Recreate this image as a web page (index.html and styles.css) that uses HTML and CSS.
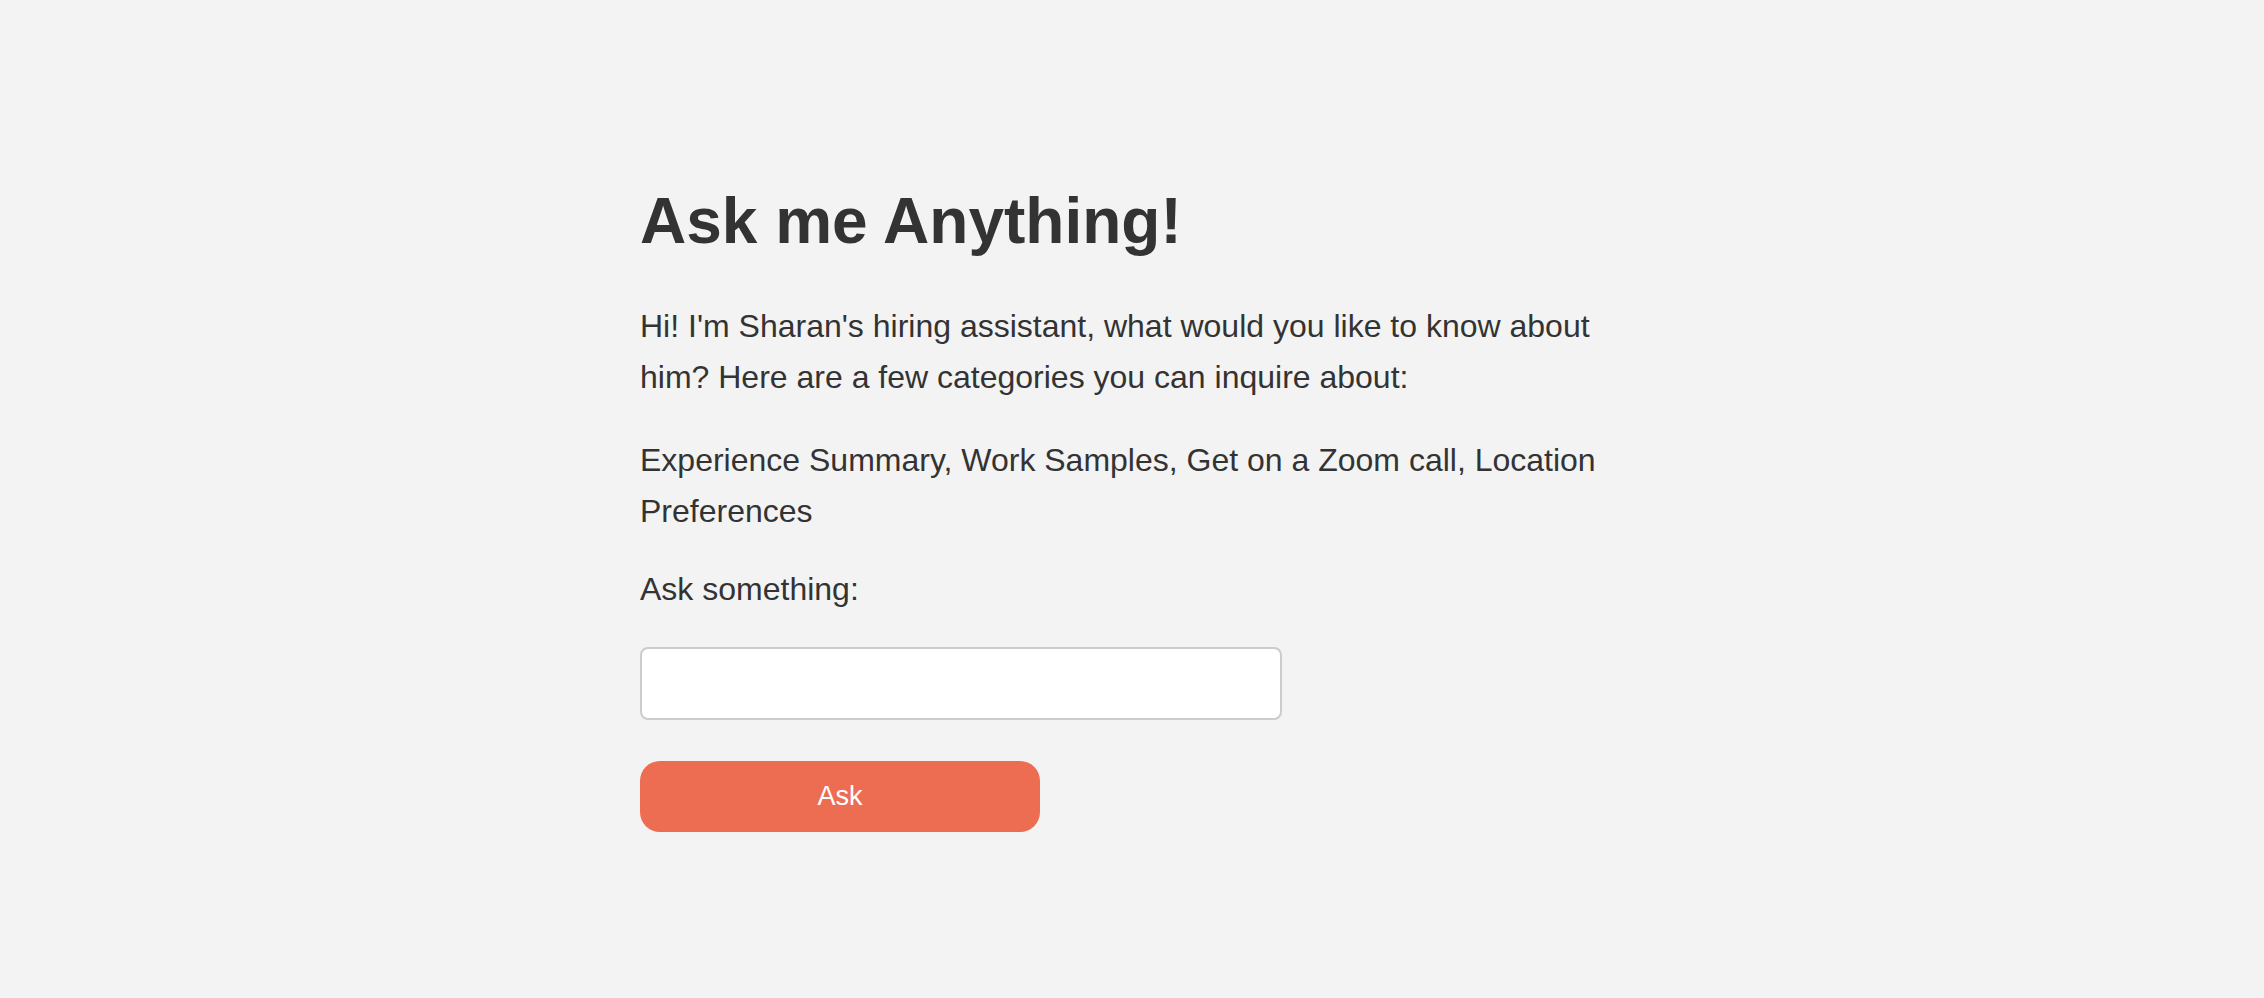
FILE: index.html
```html
<!DOCTYPE html>
<html lang="en">
<head>
  <meta charset="UTF-8">
  <meta name="viewport" content="width=device-width, initial-scale=1.0">
  <title>Ask me Anything!</title>
  <link rel="stylesheet" href="styles.css">
</head>
<body>
  <div class="container">
    <h1>Ask me Anything!</h1>
    <p class="intro">Hi! I'm Sharan's hiring assistant, what would you like to know about him? Here are a few categories you can inquire about:</p>
    <p class="categories">Experience Summary, Work Samples, Get on a Zoom call, Location Preferences</p>
    <form id="askForm">
      <label for="question">Ask something:</label>
      <input type="text" id="question" name="question">
      <button type="submit">Ask</button>
    </form>
  </div>
</body>
</html>
```

FILE: styles.css
```css
body {
  font-family: "Liberation Sans", Arial, Helvetica, sans-serif;
  margin: 0;
  padding: 0;
  background-color: #f3f3f3;
  color: #333;
}
.container {
  max-width: 984px;
  margin: 0 auto;
  padding: 183px 0 100px;
}
h1 {
  font-size: 64px;
  line-height: 1.2;
  font-weight: bold;
  margin: 0 0 41px;
}
p {
  font-size: 32px;
  line-height: 1.6;
  margin: 0 0 32px;
}
.categories {
  margin-bottom: 26px;
}
label {
  display: block;
  font-size: 32px;
  line-height: 1.6;
  margin-bottom: 32px;
}
input {
  display: block;
  width: 642px;
  height: 73px;
  padding: 10px 16px;
  font-size: 30px;
  font-family: inherit;
  background: white;
  border: 2px solid #cccccc;
  border-radius: 8px;
  box-sizing: border-box;
  margin-bottom: 41px;
}
input:focus {
  outline: none;
}
button {
  display: block;
  width: 400px;
  height: 71px;
  background-color: #ed6d53;
  color: white;
  border: none;
  border-radius: 20px;
  font-family: inherit;
  font-size: 27px;
  cursor: pointer;
}
button:hover {
  background-color: #e05b40;
}
```
